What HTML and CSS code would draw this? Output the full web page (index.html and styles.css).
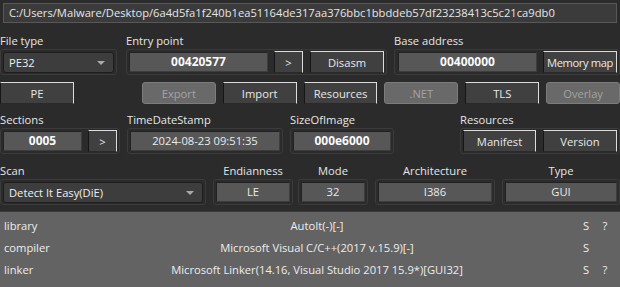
FILE: index.html
```html
<!DOCTYPE html>
<html lang="en">
<head>
	<meta charset="UTF-8">
	<title>Detect It Easy</title>
	<link rel="stylesheet" href="styles.css">
</head>
<body>
	<div class="die">
		<div class="path">C:/Users/Malware/Desktop/6a4d5fa1f240b1ea51164de317aa376bbc1bbddeb57df23238413c5c21ca9db0</div>

		<div class="row row-top">
			<div class="group g-filetype">
				<div class="label">File type</div>
				<div class="frame">
					<div class="combo">PE32<span class="arrow"></span></div>
				</div>
			</div>
			<div class="group g-entry">
				<div class="label">Entry point</div>
				<div class="frame">
					<div class="field bold w139">00420577</div>
					<button class="btn w29">&gt;</button>
					<button class="btn w74 ml7">Disasm</button>
				</div>
			</div>
			<div class="group g-base">
				<div class="label">Base address</div>
				<div class="frame">
					<div class="field bold w139">00400000</div>
					<button class="btn w74 tight">Memory map</button>
				</div>
			</div>
		</div>

		<div class="row row-buttons">
			<button class="btn w74">PE</button>
			<button class="btn w74 disabled first">Export</button>
			<button class="btn w74">Import</button>
			<button class="btn w74">Resources</button>
			<button class="btn w74 disabled">.NET</button>
			<button class="btn w74">TLS</button>
			<button class="btn w74 disabled">Overlay</button>
		</div>

		<div class="row row-mid">
			<div class="group g-sections">
				<div class="label">Sections</div>
				<div class="frame">
					<div class="field bold w79">0005</div>
					<button class="btn w29">&gt;</button>
				</div>
			</div>
			<div class="group g-stamp">
				<div class="label">TimeDateStamp</div>
				<div class="frame">
					<div class="field grow">2024-08-23 09:51:35</div>
				</div>
			</div>
			<div class="group g-size">
				<div class="label">SizeOfImage</div>
				<div class="frame">
					<div class="field bold grow">000e6000</div>
				</div>
			</div>
			<div class="group g-res">
				<div class="label">Resources</div>
				<div class="frame">
					<button class="btn w73">Manifest</button>
					<button class="btn w74 ml7">Version</button>
				</div>
			</div>
		</div>

		<div class="row row-scan">
			<div class="group g-scan">
				<div class="label">Scan</div>
				<div class="frame">
					<div class="combo grow">Detect It Easy(DiE)<span class="arrow"></span></div>
				</div>
			</div>
			<div class="group g-endian centered">
				<div class="label">Endianness</div>
				<div class="frame"><div class="field grow">LE</div></div>
			</div>
			<div class="group g-mode centered">
				<div class="label">Mode</div>
				<div class="frame"><div class="field grow">32</div></div>
			</div>
			<div class="group g-arch centered">
				<div class="label">Architecture</div>
				<div class="frame"><div class="field grow">I386</div></div>
			</div>
			<div class="group g-type centered">
				<div class="label">Type</div>
				<div class="frame"><div class="field grow">GUI</div></div>
			</div>
		</div>

		<div class="results">
			<div class="result">
				<span class="r-name">library</span>
				<span class="r-value">AutoIt(-)[-]</span>
				<span class="r-s">S</span>
				<span class="r-q">?</span>
			</div>
			<div class="result">
				<span class="r-name">compiler</span>
				<span class="r-value">Microsoft Visual C/C++(2017 v.15.9)[-]</span>
				<span class="r-s">S</span>
				<span class="r-q"></span>
			</div>
			<div class="result">
				<span class="r-name">linker</span>
				<span class="r-value">Microsoft Linker(14.16, Visual Studio 2017 15.9*)[GUI32]</span>
				<span class="r-s">S</span>
				<span class="r-q">?</span>
			</div>
		</div>
	</div>
</body>
</html>
```

FILE: styles.css
```css
* {
	box-sizing: border-box;
}

html, body {
	margin: 0;
	height: 100%;
}

body {
	background-color: #2b2b2b;
	font-family: 'Open Sans', 'Liberation Sans', sans-serif;
	font-size: 11.2px;
	color: #e6e6e6;
	overflow: hidden;
}

.die {
	padding-top: 3px;
}

.path {
	margin: 0 3px;
	height: 20px;
	line-height: 18px;
	padding: 0 5px;
	background-color: #3b3b3b;
	border: 1px solid #585858;
	white-space: nowrap;
	overflow: hidden;
}

.row {
	display: flex;
	align-items: flex-start;
}

.row-top {
	margin-top: 10px;
}

.row-buttons {
	margin-top: 7px;
}

.row-mid {
	margin-top: 8px;
}

.row-scan {
	margin-top: 9px;
}

.label {
	height: 16px;
	line-height: 16px;
	white-space: nowrap;
}

.centered .label {
	text-align: center;
}

.frame {
	display: flex;
	align-items: center;
	gap: 6px;
	height: 26px;
	padding: 0 2px;
	border: 1px solid #3b3b3b;
	border-radius: 3px;
}

/* group placement */
.g-filetype { width: 117px; }
.g-entry { width: 261px; margin-left: 9px; }
.g-base { width: 226px; margin-left: 7px; }
.g-base .frame { padding: 0 2px 0 3px; }

.g-sections { width: 120px; }
.g-stamp { width: 156px; margin-left: 7px; }
.g-size { width: 104px; margin-left: 7px; }
.g-res { width: 160px; margin-left: 66px; }

.g-scan { width: 206px; }
.g-endian { width: 80px; margin-left: 7px; }
.g-mode { width: 70px; margin-left: 5px; }
.g-arch { width: 120px; margin-left: 7px; }
.g-type { width: 118px; margin-left: 7px; }

.g-res .frame,
.g-entry .frame { gap: 0; }
.g-entry .btn.w29 { margin-left: 6px; }

.field {
	height: 20px;
	line-height: 18px;
	text-align: center;
	background-color: #575757;
	border: 1px solid #222;
	border-right-color: #3d3d3d;
	border-bottom-color: #3d3d3d;
	color: #eaeaea;
	white-space: nowrap;
}

.field.bold {
	font-weight: bold;
	font-size: 12px;
	color: #fafafa;
}

.grow {
	flex: 1;
}

.combo {
	position: relative;
	width: 112px;
	height: 21px;
	line-height: 19px;
	padding-left: 5px;
	background-color: #3d3d3d;
	border: 1px solid #1d1d1d;
	border-radius: 3px;
	color: #eeeeee;
}

.arrow {
	position: absolute;
	right: 8px;
	top: 8px;
	width: 0;
	height: 0;
	border-left: 4px solid transparent;
	border-right: 4px solid transparent;
	border-top: 4px solid #a9a9a9;
}

.btn {
	height: 22px;
	padding: 0;
	font-family: inherit;
	font-size: 11.2px;
	color: #e8e8e8;
	background-color: #404040;
	border: 1px solid #dcdcdc;
	border-left-color: #161616;
	border-bottom-color: #2a2a2a;
	white-space: nowrap;
	cursor: pointer;
}

.btn.tight {
	letter-spacing: -0.4px;
}

.btn.disabled {
	background-color: #696969;
	border: 1px solid #7c7c7c;
	border-radius: 3px;
	color: #a3a3a3;
}

.w29 { width: 29px; }
.w73 { width: 73px; }
.w74 { width: 74px; }
.w79 { width: 79px; }
.w139 { width: 139px; }
.ml7 { margin-left: 7px; }

.row-buttons .btn { margin-left: 7px; }
.row-buttons .btn:first-child { margin-left: 0; }
.row-buttons .btn.first { margin-left: 68px; }

.results {
	margin-top: 6px;
	height: 80px;
	padding-top: 3px;
	background-color: #636363;
	border-top: 1px solid #3a3a3a;
	color: #ededed;
}

.result {
	display: grid;
	grid-template-columns: 60px 514px 24px 14px;
	height: 22px;
	line-height: 22px;
	white-space: nowrap;
}

.r-name {
	padding-left: 4px;
}

.r-value,
.r-s,
.r-q {
	text-align: center;
}
```
